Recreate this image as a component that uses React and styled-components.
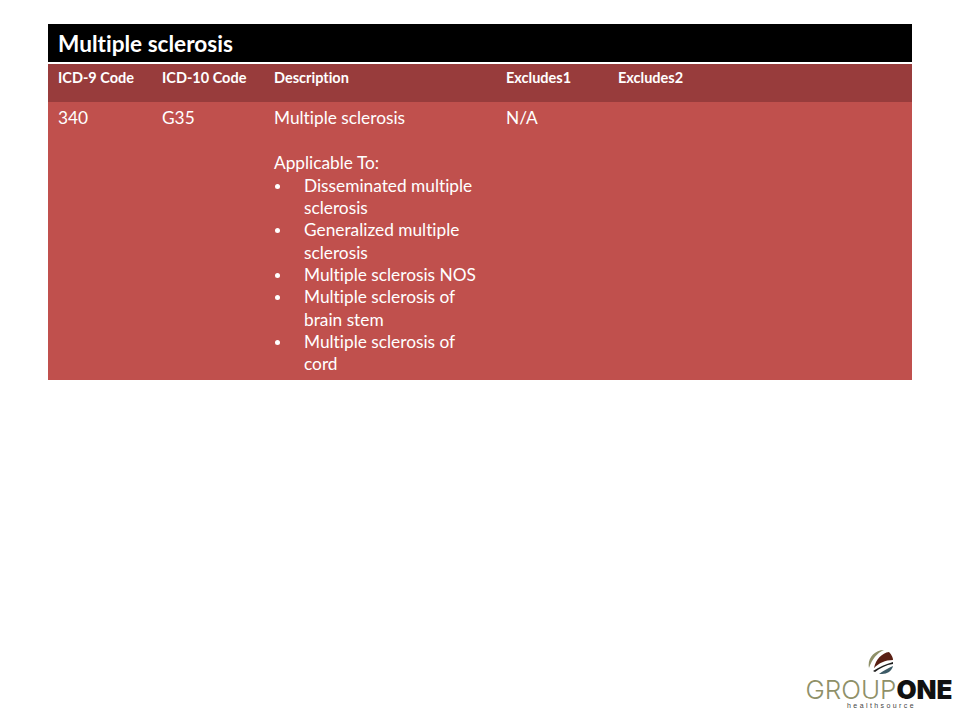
import React from "react";
import styled, {createGlobalStyle} from "styled-components";

const GlobalStyle = createGlobalStyle`
    html, body {
        margin: 0;
        padding: 0;
        background: #fff;
        font-family: "Lato", "Open Sans", sans-serif;
        font-variant-ligatures: none;
    }
`;

const columns = "104px 112px 232px 112px 1fr";

const items = [
    ["Disseminated multiple", "sclerosis"],
    ["Generalized multiple", "sclerosis"],
    ["Multiple sclerosis NOS"],
    ["Multiple sclerosis of", "brain stem"],
    ["Multiple sclerosis of", "cord"],
];

export default function App() {
    return (
        <Page>
            <GlobalStyle/>
            <Table>
                <Title>Multiple sclerosis</Title>
                <HeadRow>
                    <span>ICD-9 Code</span>
                    <span>ICD-10 Code</span>
                    <span>Description</span>
                    <span>Excludes1</span>
                    <span>Excludes2</span>
                </HeadRow>
                <BodyRow>
                    <span>340</span>
                    <span>G35</span>
                    <div>
                        <Line>Multiple sclerosis</Line>
                        <Line $gap>Applicable To:</Line>
                        <List>
                            {items.map((lines) => (
                                <Item key={lines.join()}>
                                    <Bullet/>
                                    <div>
                                        {lines.map((l) => <Line key={l}>{l}</Line>)}
                                    </div>
                                </Item>
                            ))}
                        </List>
                    </div>
                    <span>N/A</span>
                    <span/>
                </BodyRow>
            </Table>
            <Logo>
                <Globe width="26" height="25" viewBox="0 0 26 25">
                    <path d="M1 18C-1 9 6 0 16 0 9 3 4 9 1 18z" fill="#8f9068"/>
                    <path d="M6 18C8 9 14 3 21 2c3 3 4 6 4 8-8 0-14 3-19 8z" fill="#5a1f14"/>
                    <path d="M5 21c6-4 13-7 20-9v2c-7 1-13 4-18 8z" fill="#1c1c1c"/>
                    <path d="M11 24c4-3 9-6 14-8-1 5-6 8-11 8z" fill="#3c5a66"/>
                </Globe>
                <Wordmark><Thin>GROUP</Thin><Bold>ONE</Bold></Wordmark>
                <Tagline>healthsource</Tagline>
            </Logo>
        </Page>
    );
}

const Page = styled.div`
    width: 960px;
    height: 720px;
    box-sizing: border-box;
    padding: 24px 48px 0;
    display: flex;
    flex-direction: column;
    justify-content: space-between;
    overflow: hidden;
`;

const Table = styled.div`
    width: 864px;
    color: #fff;
`;

const Title = styled.div`
    height: 38px;
    background: #000;
    padding-left: 10px;
    font-size: 22.6px;
    font-weight: 700;
    line-height: 40px;
    border-bottom: 2px solid #fff;
`;

const HeadRow = styled.div`
    display: grid;
    grid-template-columns: ${columns};
    height: 38px;
    padding-left: 10px;
    background: #983c3c;
    font-size: 14.5px;
    font-weight: 700;
    line-height: 28px;
`;

const BodyRow = styled.div`
    display: grid;
    grid-template-columns: ${columns};
    height: 278px;
    box-sizing: border-box;
    padding: 5px 0 0 10px;
    background: #c0504d;
    font-size: 17.3px;
    line-height: 22.3px;
`;

const Line = styled.div`
    margin-top: ${(p) => (p.$gap ? "22.3px" : "0")};
    white-space: nowrap;
`;

const List = styled.div`
    display: flex;
    flex-direction: column;
    padding-top: 1px;
`;

const Item = styled.div`
    display: flex;
`;

const Bullet = styled.i`
    flex: none;
    width: 5px;
    height: 5px;
    margin: 9px 24px 0 1px;
    border-radius: 50%;
    background: #fff;
`;

const Logo = styled.div`
    align-self: flex-end;
    width: 146px;
    margin: 0 -40px 10px 0;
    display: flex;
    flex-direction: column;
    align-items: center;
    gap: 2px;
`;

const Globe = styled.svg`
    margin: 0 0 3px 3px;
`;

const Wordmark = styled.div`
    font-family: "Inter", sans-serif;
    font-size: 26px;
    line-height: 20px;
    white-space: nowrap;
`;

const Thin = styled.span`
    font-weight: 300;
    color: #8f9068;
`;

const Bold = styled.span`
    font-weight: 900;
    color: #111;
`;

const Tagline = styled.div`
    font-family: "Liberation Sans", sans-serif;
    font-size: 7px;
    line-height: 8px;
    letter-spacing: 2.4px;
    padding-left: 5px;
    color: #444;
`;
